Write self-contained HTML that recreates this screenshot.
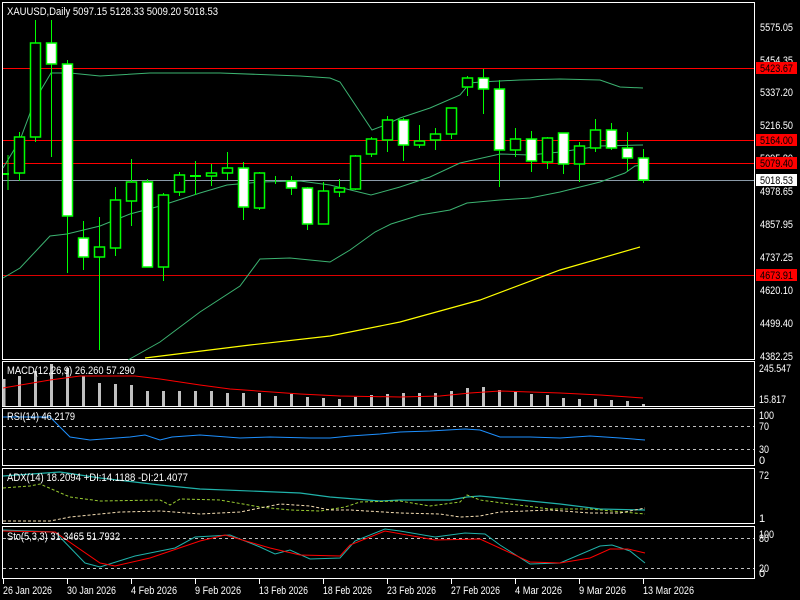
<!DOCTYPE html>
<html><head><meta charset="utf-8"><style>
html,body{margin:0;padding:0;background:#000;width:800px;height:600px;overflow:hidden}
svg{display:block}
text{font-family:"Liberation Sans",sans-serif;font-size:11px;fill:#fff}
.w{stroke:#00ff00;stroke-width:1}
.bu{fill:#000;stroke:#00ff00;stroke-width:1.5}
.be{fill:#fff;stroke:#00ff00;stroke-width:1.5}
</style></head><body>
<svg width="800" height="600" viewBox="0 0 800 600" xmlns="http://www.w3.org/2000/svg">
<rect width="800" height="600" fill="#000"/>
<g fill="none" stroke="#fff" stroke-width="1">
<rect x="2.5" y="2.5" width="752" height="357"/>
<rect x="2.5" y="361.5" width="752" height="45"/>
<rect x="2.5" y="408.5" width="752" height="57"/>
<rect x="2.5" y="468.5" width="752" height="55"/>
<rect x="2.5" y="526.5" width="752" height="52"/>
</g>
<line x1="3" y1="68.5" x2="754" y2="68.5" stroke="#ff0000"/>
<line x1="3" y1="140.5" x2="754" y2="140.5" stroke="#ff0000"/>
<line x1="3" y1="163.5" x2="754" y2="163.5" stroke="#ff0000"/>
<line x1="3" y1="275.5" x2="754" y2="275.5" stroke="#dd0000"/>
<line x1="3" y1="180.5" x2="754" y2="180.5" stroke="#8a9aa8"/>
<g fill="none" stroke="#3cb371" stroke-width="1">
<polyline points="3,168 20,140 35,100 51,73 70,73 100,76 150,73 220,73 300,76 330,78 340,82 372,130 385,125 400,118 430,108 460,95 470,83 480,82 520,80 560,79 600,80 620,87 643,88"/>
<polyline points="3,278 20,268 50,236 67,234 100,226 130,214 160,206 200,193 227,185 260,182 300,181 330,185 371,195 400,187 430,177 460,163 500,154 530,155 560,152 600,146 643,145"/>
<polyline points="128,360 160,342 200,312 240,286 260,259 290,258 310,260 330,262 350,250 375,232 391,224 420,215 450,210 467,203 500,200 530,198 560,192 600,182 625,173 635,166 643,165"/>
</g>
<polyline fill="none" stroke="#ffff00" stroke-width="1.2" points="145,358 250,345 330,336 400,322 480,300 560,270 640,247"/>
<g>
<line class="w" x1="8" y1="155" x2="8" y2="190"/><line x1="3" y1="174" x2="9" y2="174" stroke="#00ff00" stroke-width="2"/>
<line class="w" x1="19.5" y1="132" x2="19.5" y2="181"/><rect class="bu" x="14.5" y="137" width="10" height="36"/>
<line class="w" x1="35.5" y1="20" x2="35.5" y2="142"/><rect class="bu" x="30.5" y="43" width="10" height="94"/>
<line class="w" x1="51.5" y1="20" x2="51.5" y2="157"/><rect class="be" x="46.5" y="43" width="10" height="21"/>
<line class="w" x1="67.5" y1="60" x2="67.5" y2="273"/><rect class="be" x="62.5" y="64" width="10" height="152"/>
<line class="w" x1="83.5" y1="221" x2="83.5" y2="270"/><rect class="be" x="78.5" y="238" width="10" height="19"/>
<line class="w" x1="99.5" y1="217" x2="99.5" y2="350"/><rect class="bu" x="94.5" y="247" width="10" height="10"/>
<line class="w" x1="115.5" y1="187" x2="115.5" y2="256"/><rect class="bu" x="110.5" y="200" width="10" height="48"/>
<line class="w" x1="131.5" y1="159" x2="131.5" y2="226"/><rect class="bu" x="126.5" y="182" width="10" height="19"/>
<line class="w" x1="147.5" y1="179" x2="147.5" y2="267"/><rect class="be" x="142.5" y="182" width="10" height="85"/>
<line class="w" x1="163.5" y1="193" x2="163.5" y2="281"/><rect class="bu" x="158.5" y="195" width="10" height="72"/>
<line class="w" x1="179.5" y1="172" x2="179.5" y2="196"/><rect class="bu" x="174.5" y="175" width="10" height="17"/>
<line class="w" x1="195.5" y1="161" x2="195.5" y2="195"/><line x1="190" y1="176" x2="201" y2="176" stroke="#00ff00" stroke-width="2"/>
<line class="w" x1="211.5" y1="164" x2="211.5" y2="186"/><rect class="bu" x="206.5" y="173" width="10" height="3"/>
<line class="w" x1="227.5" y1="152" x2="227.5" y2="180"/><rect class="bu" x="222.5" y="168" width="10" height="5"/>
<line class="w" x1="243.5" y1="162" x2="243.5" y2="220"/><rect class="be" x="238.5" y="168" width="10" height="39"/>
<line class="w" x1="259.5" y1="172" x2="259.5" y2="210"/><rect class="bu" x="254.5" y="173" width="10" height="35"/>
<line class="w" x1="275.5" y1="176" x2="275.5" y2="184"/>
<line class="w" x1="291.5" y1="176" x2="291.5" y2="195"/><rect class="be" x="286.5" y="181" width="10" height="7"/>
<line class="w" x1="307.5" y1="187" x2="307.5" y2="230"/><rect class="be" x="302.5" y="188" width="10" height="36"/>
<line class="w" x1="323.5" y1="182" x2="323.5" y2="224"/><rect class="bu" x="318.5" y="191" width="10" height="33"/>
<line class="w" x1="339.5" y1="179" x2="339.5" y2="197"/><rect class="bu" x="334.5" y="188" width="10" height="4"/>
<line class="w" x1="355.5" y1="155" x2="355.5" y2="190"/><rect class="bu" x="350.5" y="156" width="10" height="33"/>
<line class="w" x1="371.5" y1="137" x2="371.5" y2="157"/><rect class="bu" x="366.5" y="139" width="10" height="15"/>
<line class="w" x1="387.5" y1="116" x2="387.5" y2="152"/><rect class="bu" x="382.5" y="120" width="10" height="20"/>
<line class="w" x1="403.5" y1="118" x2="403.5" y2="161"/><rect class="be" x="398.5" y="120" width="10" height="25"/>
<line class="w" x1="419.5" y1="125" x2="419.5" y2="148"/><rect class="bu" x="414.5" y="141" width="10" height="4"/>
<line class="w" x1="435.5" y1="128" x2="435.5" y2="150"/><rect class="bu" x="430.5" y="134" width="10" height="6"/>
<line class="w" x1="451.5" y1="108" x2="451.5" y2="139"/><rect class="bu" x="446.5" y="108" width="10" height="26"/>
<line class="w" x1="467.5" y1="76" x2="467.5" y2="96"/><rect class="bu" x="462.5" y="78" width="10" height="9"/>
<line class="w" x1="483.5" y1="69" x2="483.5" y2="114"/><rect class="be" x="478.5" y="78" width="10" height="11"/>
<line class="w" x1="499.5" y1="80" x2="499.5" y2="187"/><rect class="be" x="494.5" y="89" width="10" height="61"/>
<line class="w" x1="515.5" y1="128" x2="515.5" y2="157"/><rect class="bu" x="510.5" y="139" width="10" height="11"/>
<line class="w" x1="531.5" y1="131" x2="531.5" y2="172"/><rect class="be" x="526.5" y="139" width="10" height="22"/>
<line class="w" x1="547.5" y1="137" x2="547.5" y2="169"/><rect class="bu" x="542.5" y="138" width="10" height="24"/>
<line class="w" x1="563.5" y1="133" x2="563.5" y2="174"/><rect class="be" x="558.5" y="133" width="10" height="31"/>
<line class="w" x1="579.5" y1="142" x2="579.5" y2="182"/><rect class="bu" x="574.5" y="146" width="10" height="18"/>
<line class="w" x1="595.5" y1="119" x2="595.5" y2="152"/><rect class="bu" x="590.5" y="130" width="10" height="18"/>
<line class="w" x1="611.5" y1="123" x2="611.5" y2="150"/><rect class="be" x="606.5" y="130" width="10" height="18"/>
<line class="w" x1="627.5" y1="132" x2="627.5" y2="171"/><rect class="be" x="622.5" y="148" width="10" height="10"/>
<line class="w" x1="643.5" y1="149" x2="643.5" y2="183"/><rect class="be" x="638.5" y="158" width="10" height="22"/>
</g>
<g>
<text x="760" y="31" textLength="33" lengthAdjust="spacingAndGlyphs">5575.05</text>
<text x="760" y="64" textLength="33" lengthAdjust="spacingAndGlyphs">5454.35</text>
<text x="760" y="96" textLength="33" lengthAdjust="spacingAndGlyphs">5337.20</text>
<text x="760" y="129" textLength="33" lengthAdjust="spacingAndGlyphs">5216.50</text>
<text x="760" y="162" textLength="33" lengthAdjust="spacingAndGlyphs">5095.80</text>
<text x="760" y="195" textLength="33" lengthAdjust="spacingAndGlyphs">4978.65</text>
<text x="760" y="228" textLength="33" lengthAdjust="spacingAndGlyphs">4857.95</text>
<text x="760" y="261" textLength="33" lengthAdjust="spacingAndGlyphs">4737.25</text>
<text x="760" y="294" textLength="33" lengthAdjust="spacingAndGlyphs">4620.10</text>
<text x="760" y="327" textLength="33" lengthAdjust="spacingAndGlyphs">4499.40</text>
<text x="760" y="360" textLength="33" lengthAdjust="spacingAndGlyphs">4382.25</text>
<rect x="756" y="62" width="41" height="12" fill="#ff0000"/><text x="760" y="72" style="fill:#000" textLength="33" lengthAdjust="spacingAndGlyphs">5423.67</text>
<rect x="756" y="134" width="41" height="12" fill="#ff0000"/><text x="760" y="144" style="fill:#000" textLength="33" lengthAdjust="spacingAndGlyphs">5164.00</text>
<rect x="756" y="157" width="41" height="12" fill="#ff0000"/><text x="760" y="167" style="fill:#000" textLength="33" lengthAdjust="spacingAndGlyphs">5079.40</text>
<rect x="756" y="174" width="41" height="12" fill="#fff"/><text x="760" y="184" style="fill:#000" textLength="33" lengthAdjust="spacingAndGlyphs">5018.53</text>
<rect x="756" y="269" width="41" height="12" fill="#ff0000"/><text x="760" y="279" style="fill:#000" textLength="33" lengthAdjust="spacingAndGlyphs">4673.91</text>
</g>
<text x="7" y="15" textLength="211" lengthAdjust="spacingAndGlyphs">XAUUSD,Daily  5097.15 5128.33 5009.20 5018.53</text>
<g stroke="#c0c0c0" stroke-width="3">
<line x1="4" y1="406" x2="4" y2="379"/><line x1="19.5" y1="406" x2="19.5" y2="376"/><line x1="35.5" y1="406" x2="35.5" y2="371"/><line x1="51.5" y1="406" x2="51.5" y2="364"/><line x1="67.5" y1="406" x2="67.5" y2="368"/><line x1="83.5" y1="406" x2="83.5" y2="376"/><line x1="99.5" y1="406" x2="99.5" y2="383"/><line x1="115.5" y1="406" x2="115.5" y2="384"/><line x1="131.5" y1="406" x2="131.5" y2="385"/><line x1="147.5" y1="406" x2="147.5" y2="391"/><line x1="163.5" y1="406" x2="163.5" y2="391"/><line x1="179.5" y1="406" x2="179.5" y2="391"/><line x1="195.5" y1="406" x2="195.5" y2="391"/><line x1="211.5" y1="406" x2="211.5" y2="391"/><line x1="227.5" y1="406" x2="227.5" y2="393"/><line x1="243.5" y1="406" x2="243.5" y2="393"/><line x1="259.5" y1="406" x2="259.5" y2="393"/><line x1="275.5" y1="406" x2="275.5" y2="396"/><line x1="291.5" y1="406" x2="291.5" y2="394"/><line x1="307.5" y1="406" x2="307.5" y2="397"/><line x1="323.5" y1="406" x2="323.5" y2="398"/><line x1="339.5" y1="406" x2="339.5" y2="399"/><line x1="355.5" y1="406" x2="355.5" y2="397"/><line x1="371.5" y1="406" x2="371.5" y2="395"/><line x1="387.5" y1="406" x2="387.5" y2="394"/><line x1="403.5" y1="406" x2="403.5" y2="393"/><line x1="419.5" y1="406" x2="419.5" y2="393"/><line x1="435.5" y1="406" x2="435.5" y2="393"/><line x1="451.5" y1="406" x2="451.5" y2="391"/><line x1="467.5" y1="406" x2="467.5" y2="388"/><line x1="483.5" y1="406" x2="483.5" y2="387"/><line x1="499.5" y1="406" x2="499.5" y2="390"/><line x1="515.5" y1="406" x2="515.5" y2="391"/><line x1="531.5" y1="406" x2="531.5" y2="394"/><line x1="547.5" y1="406" x2="547.5" y2="395"/><line x1="563.5" y1="406" x2="563.5" y2="398"/><line x1="579.5" y1="406" x2="579.5" y2="399"/><line x1="595.5" y1="406" x2="595.5" y2="399"/><line x1="611.5" y1="406" x2="611.5" y2="400"/><line x1="627.5" y1="406" x2="627.5" y2="401"/><line x1="643.5" y1="406" x2="643.5" y2="404"/>
</g>
<polyline fill="none" stroke="#ff0000" points="3,388 50,380 80,376 135,376 160,379 200,385 230,389 300,394 340,396 400,397 440,396 470,393 500,391 560,393 600,395 643,398"/>
<text x="7" y="374" textLength="128" lengthAdjust="spacingAndGlyphs">MACD(12,26,9) 26.260 57.290</text>
<text x="759" y="372" textLength="32" lengthAdjust="spacingAndGlyphs">245.547</text>
<text x="759" y="403" textLength="27" lengthAdjust="spacingAndGlyphs">15.817</text>
<g stroke="#c0c0c0" stroke-dasharray="3,3"><line x1="3" y1="426.5" x2="754" y2="426.5"/><line x1="3" y1="449.5" x2="754" y2="449.5"/></g>
<polyline fill="none" stroke="#1e90ff" points="3,417 50,417 70,437 90,440 130,437 145,435 160,440 172,437 200,435 240,438 270,437 310,438 330,438 350,436 380,434 400,432 430,431 465,429 480,430 500,437 530,437 560,438 590,436 620,438 645,440"/>
<text x="7" y="420" textLength="68" lengthAdjust="spacingAndGlyphs">RSI(14) 46.2179</text>
<text x="759" y="419" textLength="15" lengthAdjust="spacingAndGlyphs">100</text><text x="759" y="430" textLength="10" lengthAdjust="spacingAndGlyphs">70</text><text x="759" y="453" textLength="10" lengthAdjust="spacingAndGlyphs">30</text><text x="759" y="464">0</text>
<polyline fill="none" stroke="#20b2aa" stroke-width="1.2" points="3,476 60,472 100,478 160,485 200,489 300,493 330,497 380,501 400,500 450,500 467,497 480,496 520,500 560,504 600,509 645,510"/>
<polyline fill="none" stroke="#9acd32" stroke-dasharray="3,2" points="3,488 30,486 40,484 70,497 100,501 160,500 170,505 180,499 220,500 260,507 290,510 320,511 345,507 360,502 400,501 430,506 460,502 467,495 480,500 510,504 550,509 590,509 645,514"/>
<polyline fill="none" stroke="#f5deb3" stroke-dasharray="3,2" points="3,521 50,521 70,517 120,512 160,511 200,514 240,512 280,504 310,506 330,510 350,510 400,513 440,514 460,517 480,516 500,512 550,510 590,513 620,513 645,508"/>
<text x="7" y="481" textLength="181" lengthAdjust="spacingAndGlyphs">ADX(14) 18.2094 +DI:14.1188 -DI:21.4077</text>
<text x="759" y="479" textLength="10" lengthAdjust="spacingAndGlyphs">72</text><text x="759" y="522">1</text>
<g stroke="#c0c0c0" stroke-dasharray="3,3"><line x1="3" y1="538.5" x2="754" y2="538.5"/><line x1="3" y1="568.5" x2="754" y2="568.5"/></g>
<polyline fill="none" stroke="#20b2aa" points="3,530 55,532 85,563 100,567 135,556 175,548 195,537 230,535 260,547 275,554 290,550 310,559 340,558 355,541 385,529 400,531 435,537 465,533 485,534 500,545 530,564 560,563 600,546 612,545 630,551 645,563"/>
<polyline fill="none" stroke="#ff0000" points="3,531 55,532 100,563 115,566 150,558 200,541 225,535 270,548 300,555 340,556 350,545 385,531 435,540 480,539 530,562 560,563 590,558 610,549 628,549 645,553"/>
<text x="7" y="540" textLength="113" lengthAdjust="spacingAndGlyphs">Sto(5,3,3) 31.3465 51.7932</text>
<text x="759" y="538" textLength="15" lengthAdjust="spacingAndGlyphs">100</text><text x="759" y="542" textLength="10" lengthAdjust="spacingAndGlyphs">80</text><text x="759" y="572" textLength="10" lengthAdjust="spacingAndGlyphs">20</text><text x="759" y="577">0</text>
<g stroke="#fff"><line x1="3.5" y1="579" x2="3.5" y2="584"/><line x1="67.5" y1="579" x2="67.5" y2="584"/><line x1="131.5" y1="579" x2="131.5" y2="584"/><line x1="195.5" y1="579" x2="195.5" y2="584"/><line x1="259.5" y1="579" x2="259.5" y2="584"/><line x1="323.5" y1="579" x2="323.5" y2="584"/><line x1="387.5" y1="579" x2="387.5" y2="584"/><line x1="451.5" y1="579" x2="451.5" y2="584"/><line x1="515.5" y1="579" x2="515.5" y2="584"/><line x1="579.5" y1="579" x2="579.5" y2="584"/><line x1="643.5" y1="579" x2="643.5" y2="584"/></g>
<g><text x="3" y="594" textLength="49" lengthAdjust="spacingAndGlyphs">26 Jan 2026</text><text x="67" y="594" textLength="49" lengthAdjust="spacingAndGlyphs">30 Jan 2026</text><text x="131" y="594" textLength="46" lengthAdjust="spacingAndGlyphs">4 Feb 2026</text><text x="195" y="594" textLength="46" lengthAdjust="spacingAndGlyphs">9 Feb 2026</text><text x="259" y="594" textLength="49" lengthAdjust="spacingAndGlyphs">13 Feb 2026</text><text x="323" y="594" textLength="49" lengthAdjust="spacingAndGlyphs">18 Feb 2026</text><text x="387" y="594" textLength="49" lengthAdjust="spacingAndGlyphs">23 Feb 2026</text><text x="451" y="594" textLength="49" lengthAdjust="spacingAndGlyphs">27 Feb 2026</text><text x="515" y="594" textLength="47" lengthAdjust="spacingAndGlyphs">4 Mar 2026</text><text x="579" y="594" textLength="47" lengthAdjust="spacingAndGlyphs">9 Mar 2026</text><text x="643" y="594" textLength="51" lengthAdjust="spacingAndGlyphs">13 Mar 2026</text></g>
</svg>
</body></html>
